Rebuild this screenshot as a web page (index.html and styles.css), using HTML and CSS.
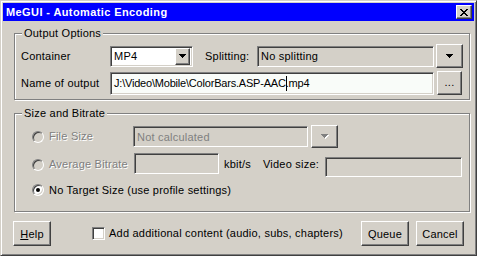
FILE: index.html
```html
<!DOCTYPE html>
<html>
<head>
<meta charset="utf-8">
<link rel="stylesheet" href="styles.css">
</head>
<body>
<div class="window">
  <div class="titlebar">
    <span class="title">MeGUI - Automatic Encoding</span>
    <span class="close">
      <svg width="8" height="7" viewBox="0 0 8 7" shape-rendering="crispEdges">
        <path fill="#000" d="M0 0h2v1H0zM6 0h2v1H6zM1 1h2v1H1zM5 1h2v1H5zM2 2h4v1H2zM3 3h2v1H3zM2 4h4v1H2zM1 5h2v1H1zM5 5h2v1H5zM0 6h2v1H0zM6 6h2v1H6z"/>
      </svg>
    </span>
  </div>
  <div class="content">
    <div class="group g1">
      <span class="legend">Output Options</span>
      <div class="row row-a">
        <span class="lbl lbl-col">Container</span>
        <div class="combo sunken">
          <span class="combo-text">MP4</span>
          <span class="combo-btn raised"><svg class="arrow" width="7" height="4" viewBox="0 0 7 4" shape-rendering="crispEdges"><path fill="#000" d="M0 0h7v1H0zM1 1h5v1H1zM2 2h3v1H2zM3 3h1v1H3z"/></svg></span>
        </div>
        <span class="lbl lbl-split">Splitting:</span>
        <div class="field sunken split-field">No splitting</div>
        <span class="btn raised btn-split"><svg class="arrow" width="7" height="4" viewBox="0 0 7 4" shape-rendering="crispEdges"><path fill="#000" d="M0 0h7v1H0zM1 1h5v1H1zM2 2h3v1H2zM3 3h1v1H3z"/></svg></span>
      </div>
      <div class="row row-b">
        <span class="lbl lbl-col">Name of output</span>
        <div class="field sunken white name-field">J:\Video\Mobile\ColorBars.ASP-AAC<span class="caret"></span>.mp4</div>
        <span class="btn raised btn-dots">...</span>
      </div>
    </div>

    <div class="group g2">
      <span class="legend">Size and Bitrate</span>
      <div class="row row-1">
        <span class="opt opt-col"><span class="radio"></span><span class="lbl disabled">File Size</span></span>
        <div class="field sunken dis-combo">Not calculated</div>
        <span class="btn raised btn-dis"><svg class="arrow" width="8" height="5" viewBox="0 0 8 5" shape-rendering="crispEdges"><path fill="#fff" d="M1 1h7v1H1zM2 2h5v1H2zM3 3h3v1H3zM4 4h1v1H4z"/><path fill="#808080" d="M0 0h7v1H0zM1 1h5v1H1zM2 2h3v1H2zM3 3h1v1H3z"/></svg></span>
      </div>
      <div class="row row-2">
        <span class="opt opt-col"><span class="radio"></span><span class="lbl disabled">Average Bitrate</span></span>
        <div class="field sunken bitrate-box"></div>
        <span class="lbl kbit">kbit/s</span>
        <span class="lbl vsize">Video size:</span>
        <div class="field sunken vsize-box"></div>
      </div>
      <div class="row row-3">
        <span class="opt"><span class="radio checked"></span><span class="lbl">No Target Size (use profile settings)</span></span>
      </div>
    </div>

    <div class="bottom">
      <span class="btn raised btn-help"><u>H</u>elp</span>
      <span class="check sunken"></span>
      <span class="lbl check-lbl">Add additional content (audio, subs, chapters)</span>
      <span class="btn raised btn-queue">Queue</span>
      <span class="btn raised btn-cancel">Cancel</span>
    </div>
  </div>
</div>
</body>
</html>
```

FILE: styles.css
```css
html, body {
  margin: 0;
  padding: 0;
  background: #d4d0c8;
}
body {
  font-family: "Liberation Sans", Arial, sans-serif;
  font-size: 11px;
  letter-spacing: 0.22px;
  color: #000;
}
.window {
  width: 477px;
  height: 256px;
  box-sizing: border-box;
  border: 1px solid;
  border-color: #d4d0c8 #404040 #404040 #d4d0c8;
  box-shadow: inset 1px 1px 0 #fff, inset -1px -1px 0 #808080;
  padding: 2px;
  background: #d4d0c8;
}
.titlebar {
  height: 18px;
  background: #0000ff;
  display: flex;
  align-items: center;
  padding-left: 3px;
}
.title {
  color: #fff;
  font-weight: bold;
  font-size: 11px;
  letter-spacing: 0.4px;
  flex: 1;
}
.close {
  width: 16px;
  height: 14px;
  box-sizing: border-box;
  background: #d4d0c8;
  border: 1px solid;
  border-color: #fff #404040 #404040 #fff;
  box-shadow: inset -1px -1px 0 #808080;
  display: flex;
  align-items: center;
  justify-content: center;
  margin-right: 2px;
}
.close svg { display: block; margin-left: -1px; }

.content {
  padding-left: 11px;
  padding-top: 12px;
}
.group {
  position: relative;
  width: 456px;
  box-sizing: border-box;
  border: 1px solid #808080;
  box-shadow: inset 1px 1px 0 #fff, 1px 1px 0 #fff;
}
.legend {
  position: absolute;
  top: -7px;
  left: 7px;
  padding: 0 2px;
  background: #d4d0c8;
  line-height: 13px;
}
.g1 {
  height: 67px;
  padding: 10px 0 0 6px;
}
.g2 {
  height: 99px;
  margin-top: 13px;
  padding: 11px 0 0 17px;
}
.row {
  display: flex;
  align-items: center;
}
.row-a, .row-b { height: 24px; }
.row-b { margin-top: 3px; }
.lbl { white-space: nowrap; line-height: 13px; }
.lbl-col { width: 89px; }
.sunken {
  box-sizing: border-box;
  border: 1px solid;
  border-color: #808080 #fff #fff #808080;
  box-shadow: inset 1px 1px 0 #404040, inset -1px -1px 0 #d4d0c8;
}
.raised {
  box-sizing: border-box;
  border: 1px solid;
  border-color: #fff #404040 #404040 #fff;
  box-shadow: inset -1px -1px 0 #808080;
  background: #d4d0c8;
}
.combo {
  width: 83px;
  height: 21px;
  background: #fff;
  display: flex;
  align-items: center;
  padding: 2px;
}
.combo-text { flex: 1; padding-left: 1px; }
.combo-btn {
  width: 15px;
  height: 17px;
  display: flex;
  align-items: center;
  justify-content: center;
}
.arrow { display: block; }
.lbl-split { margin-left: 12px; width: 52px; }
.field {
  display: flex;
  align-items: center;
  padding-left: 3px;
  white-space: nowrap;
  overflow: hidden;
}
.split-field { width: 177px; height: 21px; background: #d4d0c8; }
.btn {
  display: flex;
  align-items: center;
  justify-content: center;
  white-space: nowrap;
}
.btn-split { width: 27px; height: 24px; margin-left: 2px; }
.white { background: #f9fcf9; }
.name-field { width: 324px; height: 23px; letter-spacing: -0.2px; }
.caret {
  display: inline-block;
  width: 1px;
  height: 15px;
  background: #000;
  margin-right: -1px;
}
.btn-dots { width: 25px; height: 24px; margin-left: 3px; padding-bottom: 2px; }

.row-1 { height: 23px; }
.row-2 { height: 24px; margin-top: 5px; align-items: flex-start; }
.row-3 { height: 14px; margin-top: 6px; }
.opt { display: flex; align-items: center; }
.opt-col { width: 101px; }
.row-2 .opt { margin-top: 5px; }
.radio {
  width: 12px;
  height: 12px;
  box-sizing: border-box;
  border-radius: 50%;
  border: 1px solid;
  border-color: #808080 #fff #fff #808080;
  box-shadow: inset 1px 1px 0 #404040, inset -1px -1px 0 #d4d0c8;
  background: #d4d0c8;
  margin-right: 5px;
  position: relative;
}
.radio.checked { background: #fff; }
.radio.checked::after {
  content: "";
  position: absolute;
  left: 3px;
  top: 3px;
  width: 4px;
  height: 4px;
  border-radius: 50%;
  background: #000;
}
.disabled { color: #808080; text-shadow: 1px 1px 0 #fff; }
.dis-combo { width: 175px; height: 21px; background: #d4d0c8; color: #808080; }
.btn-dis { width: 27px; height: 23px; margin-left: 3px; }
.bitrate-box { width: 85px; height: 21px; margin-left: 1px; }
.kbit { width: 39px; margin-left: 5px; margin-top: 5px; }
.vsize { width: 62px; margin-top: 5px; }
.vsize-box { width: 137px; height: 20px; margin-top: 4px; }

.bottom {
  display: flex;
  align-items: center;
  width: 451px;
  height: 25px;
  margin-top: 9px;
  margin-left: -1px;
}
.btn-help { width: 38px; height: 25px; }
.check {
  width: 13px;
  height: 13px;
  background: #fff;
  margin-left: 41px;
}
.check-lbl { margin-left: 4px; }
.btn-queue { width: 48px; height: 25px; margin-left: auto; }
.btn-cancel { width: 48px; height: 25px; margin-left: 7px; }
```
